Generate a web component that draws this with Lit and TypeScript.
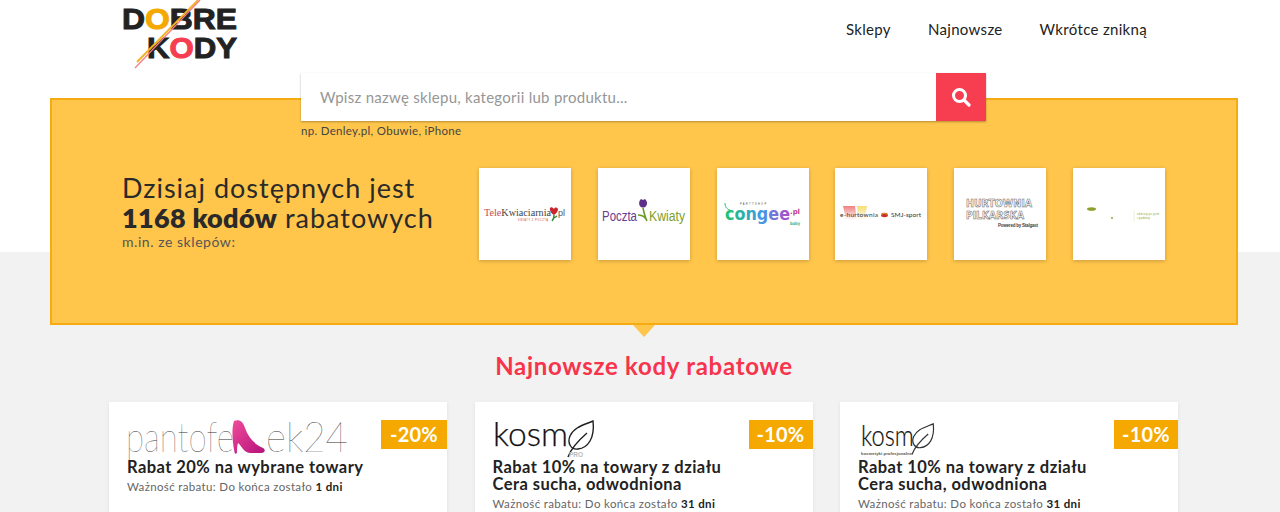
import { LitElement, html, css, svg } from "lit";
import { customElement } from "lit/decorators.js";

const tiles = [
  svg`<text x="5" y="48" font-family="Liberation Serif, serif" font-size="10" textLength="67" lengthAdjust="spacingAndGlyphs" fill="#444"><tspan fill="#c8484e">Tele</tspan>Kwiaciarnia</text>
    <path d="M75 41c-2-3-5-2-4 1 1 3 2 4 4 5 2-1 3-3 4-5 0-3-3-3-4-1z" fill="#c8262e"/>
    <path d="M75 47c0 3-1 5-2 6M75 50l3-2" stroke="#3c8a3c" stroke-width="1.500" fill="none"/>
    <text x="79" y="48" font-family="Liberation Sans, sans-serif" font-size="9" fill="#555">pl</text>
    <text x="39" y="53" font-family="Liberation Sans, sans-serif" font-size="2.600" textLength="30" fill="#c8484e">KWIATY Z POCZTĄ</text>`,
  svg`<text x="4" y="53" font-family="Liberation Sans, sans-serif" font-size="14" textLength="35" lengthAdjust="spacingAndGlyphs" fill="#6b3a8e">Poczta</text>
    <path d="M42 38c-2-3 0-6 1-7l2 1 2-1c2 2 3 5 1 7-1 2-5 2-6 0z" fill="#5d2f86"/>
    <path d="M45 40c1 5 2 9 4 13M40 47c3 0 6 1 8 4" stroke="#6d9a26" stroke-width="1.600" fill="none"/>
    <text x="51" y="53" font-family="Liberation Sans, sans-serif" font-size="14" textLength="36" lengthAdjust="spacingAndGlyphs" fill="#7fa02a">Kwiaty</text>`,
  svg`<defs><linearGradient id="cg"><stop offset="0" stop-color="#1cc46c"/><stop offset=".55" stop-color="#3f9be8"/><stop offset="1" stop-color="#b04ac8"/></linearGradient></defs>
    <text x="23" y="37" font-family="Liberation Sans, sans-serif" font-size="2.600" letter-spacing="1.300" fill="#555">PARTYSHOP</text>
    <path d="M8 35c0 3 1 6 5 7" stroke="#1cc46c" stroke-width="1" fill="none"/>
    <text x="8" y="52" font-family="DejaVu Sans, sans-serif" font-weight="700" font-size="17" textLength="65" lengthAdjust="spacingAndGlyphs" fill="url(#cg)">congee</text>
    <text x="73" y="46" font-family="DejaVu Sans, sans-serif" font-weight="700" font-size="7" textLength="10" lengthAdjust="spacingAndGlyphs" fill="#c0388c">.pl</text>
    <text x="73" y="57" font-family="DejaVu Sans, sans-serif" font-weight="700" font-size="4.500" textLength="10" lengthAdjust="spacingAndGlyphs" fill="#3fae8c">baby</text>`,
  svg`<defs>
      <linearGradient id="fr" x1="0" y1="0" x2="0" y2="1"><stop offset="0" stop-color="#f08080"/><stop offset="1" stop-color="#fff"/></linearGradient>
      <linearGradient id="fy" x1="0" y1="0" x2="0" y2="1"><stop offset="0" stop-color="#f6dc70"/><stop offset="1" stop-color="#fff"/></linearGradient>
    </defs>
    <path d="M8 38h12l2 14H11z" fill="url(#fr)"/>
    <path d="M22 38h10l-2 14h-7z" fill="url(#fy)"/>
    <text x="5" y="49" font-family="Lato, sans-serif" font-size="6.500" textLength="38" fill="#333">e-hurtownia</text>
    <ellipse cx="49.500" cy="47" rx="3.500" ry="2.200" fill="#c8322a"/>
    <path d="M46 47c2-2 5-2 7 0" stroke="#e0b020" stroke-width="1" fill="none"/>
    <text x="56" y="49" font-family="Lato, sans-serif" font-size="6.500" textLength="30" fill="#333">SMJ-sport</text>`,
  svg`<g font-family="DejaVu Sans, sans-serif" font-weight="700" fill="#fff" stroke="#666" stroke-width=".6">
      <text x="12" y="39" font-size="11" textLength="66" lengthAdjust="spacingAndGlyphs">HURTOWNIA</text>
      <text x="12" y="51" font-size="11" textLength="58" lengthAdjust="spacingAndGlyphs">PILKARSKA</text>
    </g>
    <text x="44" y="59" font-family="Liberation Sans, sans-serif" font-size="4.500" font-weight="700" textLength="40" fill="#444">Powered by Stalgast</text>`,
  svg`<ellipse cx="18.500" cy="41" rx="4.500" ry="1.800" fill="#8aa028"/>
    <circle cx="39" cy="50" r=".9" fill="#7c9a20"/>
    <path d="M61 42v12" stroke="#dfe6c8" stroke-width=".6"/>
    <text x="64" y="47" font-family="Liberation Sans, sans-serif" font-size="2.800" textLength="22" fill="#8aa028">akwizycja gsm</text>
    <text x="64" y="51" font-family="Liberation Sans, sans-serif" font-size="2.800" textLength="13" fill="#8aa028">i gadżety</text>`,
];

const leaf = svg`<path d="M27 1C18 5 8 7 4 16 1 23 5 30 12 29 22 28 29 18 27 1Z" fill="none" stroke="currentColor" stroke-width="1.400"/><path d="M2 37C5 28 13 20 21 13" fill="none" stroke="currentColor" stroke-width="1.400"/>`;

// the svgs are a bit larger than what they draw, so that tall text line boxes fit inside
const brands = [
  html`<svg class="brand" width="240" height="60" viewBox="-2 -12 240 60">
    <defs><linearGradient id="shoe" x1="0" y1="0" x2="1" y2="1"><stop offset="0" stop-color="#ef4b9b"/><stop offset="1" stop-color="#b5127a"/></linearGradient></defs>
    <text x="-1" y="32" class="thin" font-size="42" textLength="108" lengthAdjust="spacingAndGlyphs">pantofe</text>
    <path d="M107 1c5-2 9 0 11 7 3 9 9 16 18 20 3 2 2 5-2 5h-11c-7-1-8-7-12-10-1 3-1 6-1 10l-2 1c-2-8-4-24-1-33z" fill="url(#shoe)"/>
    <text x="139" y="32" class="thin" font-size="42" textLength="82" lengthAdjust="spacingAndGlyphs">ek24</text>
  </svg>`,
  html`<svg class="brand" width="108" height="54" viewBox="-2 -12 108 54">
    <text x="0" y="26" class="kosme" font-size="34" textLength="75" lengthAdjust="spacingAndGlyphs">kosm</text>
    <g transform="translate(73 0)" color="#1f1f1f">${leaf}</g>
    <text x="76" y="37" font-family="Liberation Sans, sans-serif" font-weight="700" font-size="6.500" fill="#bbb">PRO</text>
  </svg>`,
  html`<svg class="brand" width="95" height="54" viewBox="-2 -12 95 54">
    <g transform="translate(3 3) scale(.85)">
      <text x="0" y="27" class="kosme" font-size="34" textLength="62" lengthAdjust="spacingAndGlyphs">kosm</text>
      <g transform="translate(58 0)" color="#333">${leaf}</g>
      <text x="0" y="38" font-family="Liberation Sans, sans-serif" font-weight="700" font-size="5" textLength="60" fill="#555">kosmetyki profesjonalne</text>
    </g>
  </svg>`,
];

const coupons = [
  { brand: 0, off: "-20%", title: ["Rabat 20% na wybrane towary"], days: "1 dni", wide: true },
  { brand: 1, off: "-10%", title: ["Rabat 10% na towary z działu", "Cera sucha, odwodniona"], days: "31 dni", wide: false },
  { brand: 2, off: "-10%", title: ["Rabat 10% na towary z działu", "Cera sucha, odwodniona"], days: "31 dni", wide: false },
];

@customElement("app-root")
export class AppRoot extends LitElement {
  static styles = css`
    :host {
      display: block;
      height: 512px;
      overflow: hidden;
      background: linear-gradient(#fff 252px, #f2f2f2 252px);
      font-family: "Lato", "Open Sans", sans-serif;
      color: #222;
    }
    .top {
      display: flex;
      justify-content: space-between;
      height: 73px;
      padding: 0 133px 0 122px;
    }
    .logo {
      display: block;
    }
    nav {
      display: flex;
      gap: 37px;
      padding-top: 20px;
      font-size: 15px;
      line-height: 18px;
      letter-spacing: 0.32px;
      color: #222;
    }
    .search {
      position: relative;
      z-index: 1;
      display: flex;
      width: 685px;
      height: 48px;
      margin-left: 301px;
      background: #fff;
      box-shadow: 0 1px 2px rgba(0, 0, 0, 0.3);
    }
    .search .field {
      flex: 1;
      padding: 0 19px;
      font-size: 15px;
      line-height: 48px;
      letter-spacing: 0.27px;
      color: #969696;
    }
    .search .go {
      display: flex;
      align-items: center;
      justify-content: center;
      width: 50px;
      background: #f73e50;
    }
    .hero {
      position: relative;
      box-sizing: border-box;
      width: 1188px;
      height: 227px;
      margin: -23px 0 0 50px;
      border: 2px solid #f7ab12;
      background: #ffc64b;
    }
    .hero::after {
      content: "";
      position: absolute;
      left: 581px;
      bottom: -14px;
      border: 11px solid transparent;
      border-bottom: 0;
      border-top: 12px solid #ffc64b;
    }
    .hint {
      padding: 24px 0 0 249px;
      font-size: 11.500px;
      line-height: 14px;
      letter-spacing: 0.3px;
      color: #444;
    }
    .row {
      display: flex;
      padding: 30px 0 0 70px;
    }
    .lead {
      width: 357px;
      padding-top: 5px;
      font-size: 27px;
      line-height: 30px;
      letter-spacing: 1px;
      color: #2a2a2a;
    }
    .lead b {
      font-weight: 800;
      letter-spacing: 0.3px;
    }
    .lead small {
      display: block;
      margin-top: 1px;
      font-size: 14px;
      line-height: 16px;
      letter-spacing: 0.55px;
      color: #555;
    }
    .tiles {
      display: flex;
      gap: 26.800px;
    }
    .tile {
      width: 92px;
      height: 92px;
      background: #fff;
      box-shadow: 0 1px 4px rgba(0, 0, 0, 0.22);
    }
    .tile svg {
      display: block;
    }
    h2 {
      margin: 0;
      padding-top: 26px;
      width: 1288px;
      text-align: center;
      font-size: 24px;
      line-height: 29px;
      font-weight: 700;
      letter-spacing: 0.72px;
      color: #f7344b;
    }
    .cards {
      display: grid;
      grid-template-columns: repeat(3, 338px);
      gap: 27.500px;
      padding: 22px 0 0 109px;
    }
    .card {
      position: relative;
      box-sizing: border-box;
      height: 180px;
      padding: 18px 18px 0;
      background: #fff;
      box-shadow: 0 1px 4px rgba(0, 0, 0, 0.08);
    }
    .badge {
      position: absolute;
      z-index: 1;
      top: 18px;
      right: 0;
      width: 64px;
      height: 29px;
      background: #f5a800;
      color: #fff;
      font-size: 20px;
      font-weight: 700;
      line-height: 29px;
      letter-spacing: 0.2px;
      text-align: center;
    }
    .badge.wide {
      width: 66px;
    }
    .brandbox {
      display: flow-root;
      height: 39px;
    }
    .brand {
      display: block;
      margin: -12px 0 0 -2px;
    }
    .thin {
      font-family: "Lato", sans-serif;
      font-weight: 100;
      fill: #333;
    }
    .kosme {
      font-family: "Lato", sans-serif;
      font-weight: 300;
      fill: #111;
      stroke: #111;
      stroke-width: 0.25px;
    }
    .title {
      position: relative;
      font-size: 16.500px;
      line-height: 17px;
      font-weight: 700;
      letter-spacing: 0.45px;
      color: #222;
    }
    .title div {
      white-space: nowrap;
    }
    .valid {
      padding-top: 3px;
      font-size: 11.500px;
      line-height: 16px;
      letter-spacing: 0.35px;
      color: #666;
    }
    .valid b {
      color: #222;
    }
  `;

  render() {
    return html`
      <div class="top">
        <svg class="logo" width="120" height="73" viewBox="0 0 120 73">
          <g font-family="Liberation Sans, sans-serif" font-weight="700" stroke-width="1">
            <text x="0" y="29" font-size="29" textLength="115" lengthAdjust="spacingAndGlyphs" fill="#222" stroke="#222">D<tspan fill="#f5a800" stroke="#f5a800">O</tspan>BRE</text>
            <text x="25" y="58" font-size="29" textLength="90" lengthAdjust="spacingAndGlyphs" fill="#222" stroke="#222">K<tspan fill="#f73e50" stroke="#f73e50">O</tspan>DY</text>
          </g>
          <path d="M76 0L15 62" stroke="#f5b022" stroke-width="1.800"/>
          <path d="M78 0L13 68" stroke="#f47a80" stroke-width="1.200"/>
        </svg>
        <nav>
          <span>Sklepy</span>
          <span>Najnowsze</span>
          <span>Wkrótce znikną</span>
        </nav>
      </div>
      <div class="search">
        <div class="field">Wpisz nazwę sklepu, kategorii lub produktu...</div>
        <div class="go">
          <svg width="20" height="20" viewBox="0 0 20 20">
            <circle cx="8.500" cy="8.500" r="6" fill="none" stroke="#fff" stroke-width="3"/>
            <path d="M13 13l5 5" stroke="#fff" stroke-width="3.200" stroke-linecap="round"/>
          </svg>
        </div>
      </div>
      <section class="hero">
        <div class="hint">np. Denley.pl, Obuwie, iPhone</div>
        <div class="row">
          <div class="lead">
            Dzisiaj dostępnych jest<br />
            <b>1168 kodów</b> rabatowych
            <small>m.in. ze sklepów:</small>
          </div>
          <div class="tiles">
            ${tiles.map(
              (t) => html`<div class="tile"><svg width="92" height="92" viewBox="0 0 92 92">${t}</svg></div>`
            )}
          </div>
        </div>
      </section>
      <h2>Najnowsze kody rabatowe</h2>
      <div class="cards">
        ${coupons.map(
          (c) => html`
            <article class="card">
              <div class="badge ${c.wide ? "wide" : ""}">${c.off}</div>
              <div class="brandbox">${brands[c.brand]}</div>
              <div class="title">${c.title.map((l) => html`<div>${l}</div>`)}</div>
              <div class="valid">Ważność rabatu: Do końca zostało <b>${c.days}</b></div>
            </article>
          `
        )}
      </div>
    `;
  }
}
